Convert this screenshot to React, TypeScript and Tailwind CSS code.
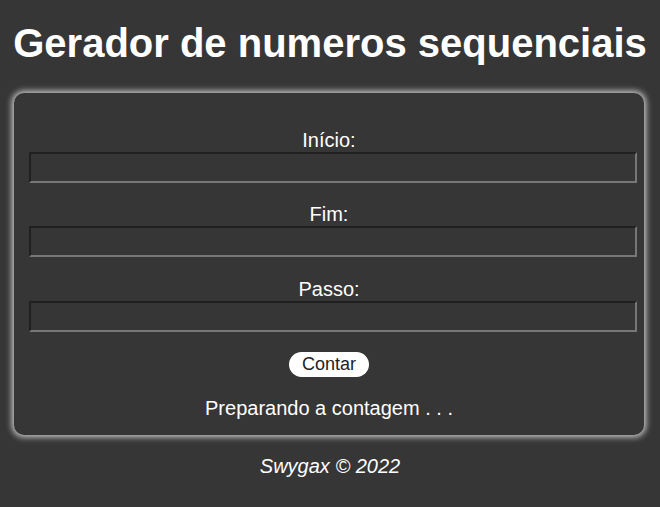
import { useState } from 'react';

const fields = ['Início:', 'Fim:', 'Passo:'];

export default function App() {
  const [status] = useState('Preparando a contagem . . .');

  return (
    <div className="min-h-[507px] bg-[#363636] font-['Liberation_Sans',Arial,sans-serif] text-white pt-[20px] pb-[20px]">
      <h1 className="text-center text-[40px] font-bold leading-[46px]">
        Gerador de numeros sequenciais
      </h1>

      <div className="ml-[14px] mr-[16px] mt-[27px] h-[342px] rounded-[10px] bg-[#363636] pl-[15px] pt-[35.5px] shadow-[0_0_6px_2px_rgba(255,255,255,0.75)]">
        <form className="flex flex-col" onSubmit={(e) => e.preventDefault()}>
          {fields.map((label, i) => (
            <div key={label} className={i > 0 ? 'mt-[20.5px]' : ''}>
              <label className="block w-[600px] text-center text-[20px] leading-[23px]">
                {label}
              </label>
              <input
                type="number"
                className="block h-[31px] w-[608px] border-2 border-t-[#202020] border-l-[#202020] border-b-[#777777] border-r-[#777777] bg-transparent text-white outline-none"
              />
            </div>
          ))}
          <div className="mt-[20px] flex w-[600px] justify-center">
            <button
              type="submit"
              className="h-[25px] w-[80px] rounded-full bg-white text-[18px] leading-[25px] text-[#222]"
            >
              Contar
            </button>
          </div>
          <p className="mt-[20.5px] w-[600px] text-center text-[20px] leading-[23px]">{status}</p>
        </form>
      </div>

      <footer className="mt-[19.5px] text-center text-[20px] italic leading-[23px]">
        Swygax © 2022
      </footer>
    </div>
  );
}
